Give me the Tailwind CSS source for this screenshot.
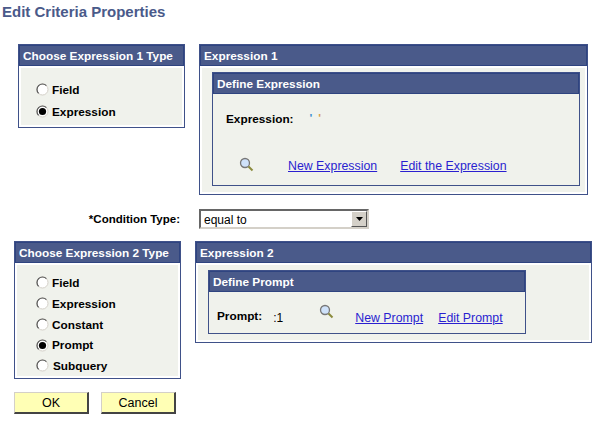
<!DOCTYPE html>
<html lang="en">
<head>
    <meta charset="UTF-8" />
    <title>Edit Criteria Properties</title>
    <script src="https://cdn.jsdelivr.net/npm/@tailwindcss/browser@4"></script>
</head>
<body class="bg-white w-[595px] h-[429px] overflow-hidden font-['Liberation_Sans',Arial,sans-serif] text-[11.8px] text-black">
    <h1 class="h-[44px] pl-[2px] pt-[4px] text-[15px] leading-4 font-bold text-[#4a5a8a]">Edit Criteria Properties</h1>

    <!-- expression 1 -->
    <div class="flex items-start gap-[14px] pl-[18px]">
        <div class="w-[167px] h-[84px] flex flex-col border border-[#3f5189]">
            <div class="h-[21px] shrink-0 bg-[#4a5a8a] border border-[#2f4480] pl-[3px] font-bold text-white leading-[21px]">Choose Expression 1 Type</div>
            <div class="flex-1 m-[2px] bg-[#f0f2ec] pt-[16px] pl-[15px] flex flex-col gap-[8px] font-bold">
                <label class="h-[14px] flex items-center gap-[3px]">
                    <svg class="w-[13px] h-[13px] -mt-[4px]" viewBox="0 0 13 13"><circle cx="6.5" cy="6.5" r="5.5" fill="#fff" stroke="#d4d0c8"/><path d="M2.6 10.4A5.5 5.5 0 0 1 10.4 2.6" fill="none" stroke="#555" stroke-width="1.2"/></svg>
                    <span>Field</span>
                </label>
                <label class="h-[14px] flex items-center gap-[3px]">
                    <svg class="w-[13px] h-[13px] -mt-[4px]" viewBox="0 0 13 13"><circle cx="6.5" cy="6.5" r="5.5" fill="#fff" stroke="#d4d0c8"/><path d="M2.6 10.4A5.5 5.5 0 0 1 10.4 2.6" fill="none" stroke="#555" stroke-width="1.2"/><circle cx="6.5" cy="6.5" r="3.6" fill="#000"/></svg>
                    <span>Expression</span>
                </label>
            </div>
        </div>

        <div class="w-[389px] h-[151px] flex flex-col border border-[#3f5189]">
            <div class="h-[21px] shrink-0 bg-[#4a5a8a] border border-[#2f4480] pl-[3px] font-bold text-white leading-[21px]">Expression 1</div>
            <div class="flex-1 m-[2px] bg-[#f0f2ec] pt-[4px] pl-[10px] pr-[5px]">
                <div class="h-[114px] flex flex-col border border-[#3f5189]">
                    <div class="h-[21px] shrink-0 bg-[#4a5a8a] border border-[#2f4480] pl-[3px] font-bold text-white leading-[21px]">Define Expression</div>
                    <div class="flex-1 pl-[13px] pt-[18px]">
                        <div class="flex font-bold leading-[14px]">
                            <span>Expression:</span>
                            <span class="ml-[16px] pt-[1px] font-bold text-[#3d8fd1] leading-[10px]">'</span>
                            <span class="ml-[6px] pt-[1px] font-bold text-[#d9a24a] leading-[10px]">'</span>
                        </div>
                        <div class="flex items-center mt-[31px] h-[18px]">
                            <svg class="w-[15px] h-[15px] ml-[13px] -mt-[4px]" viewBox="0 0 15 15"><circle cx="6" cy="6" r="4.5" fill="#cfe2fa" stroke="#777" stroke-width="1.3"/><path d="M9.5 9.5L13.5 13.5" stroke="#8a8a3c" stroke-width="2"/></svg>
                            <a href="#" class="ml-[34px] text-[12.35px] text-[#2a1fd0] underline">New Expression</a>
                            <a href="#" class="ml-[23px] text-[12.35px] text-[#2a1fd0] underline">Edit the Expression</a>
                        </div>
                    </div>
                </div>
            </div>
        </div>
    </div>

    <!-- condition -->
    <div class="flex items-center h-[20px] mt-[14px]">
        <label class="w-[180px] pt-[2px] text-right text-[11.5px] font-bold">*Condition Type:</label>
        <div class="ml-[19px] w-[170px] h-[20px] flex items-center justify-between border-2 border-t-[#666] border-l-[#666] border-r-[#d4d0c8] border-b-[#d4d0c8] bg-white">
            <span class="pl-[3px] pt-[1px] text-xs leading-4">equal to</span>
            <div class="w-[16px] h-[16px] bg-[#d4d0c8] border border-t-white border-l-white border-r-[#555] border-b-[#555] flex items-center justify-center">
                <svg class="w-[7px] h-[4px]" viewBox="0 0 7 4"><path d="M0 0H7L3.5 4Z" fill="#000"/></svg>
            </div>
        </div>
    </div>

    <!-- expression 2 -->
    <div class="flex items-start gap-[14px] pl-[14px] mt-[12px]">
        <div class="w-[167px] h-[138px] flex flex-col border border-[#3f5189]">
            <div class="h-[21px] shrink-0 bg-[#4a5a8a] border border-[#2f4480] pl-[3px] font-bold text-white leading-[21px]">Choose Expression 2 Type</div>
            <div class="flex-1 m-[2px] bg-[#f0f2ec] pt-[12px] pl-[19px] flex flex-col gap-[6.75px] font-bold">
                <label class="h-[14px] flex items-center gap-[3px]">
                    <svg class="w-[13px] h-[13px] -mt-[3px]" viewBox="0 0 13 13"><circle cx="6.5" cy="6.5" r="5.5" fill="#fff" stroke="#d4d0c8"/><path d="M2.6 10.4A5.5 5.5 0 0 1 10.4 2.6" fill="none" stroke="#555" stroke-width="1.2"/></svg>
                    <span>Field</span>
                </label>
                <label class="h-[14px] flex items-center gap-[3px]">
                    <svg class="w-[13px] h-[13px] -mt-[3px]" viewBox="0 0 13 13"><circle cx="6.5" cy="6.5" r="5.5" fill="#fff" stroke="#d4d0c8"/><path d="M2.6 10.4A5.5 5.5 0 0 1 10.4 2.6" fill="none" stroke="#555" stroke-width="1.2"/></svg>
                    <span>Expression</span>
                </label>
                <label class="h-[14px] flex items-center gap-[3px]">
                    <svg class="w-[13px] h-[13px] -mt-[3px]" viewBox="0 0 13 13"><circle cx="6.5" cy="6.5" r="5.5" fill="#fff" stroke="#d4d0c8"/><path d="M2.6 10.4A5.5 5.5 0 0 1 10.4 2.6" fill="none" stroke="#555" stroke-width="1.2"/></svg>
                    <span>Constant</span>
                </label>
                <label class="h-[14px] flex items-center gap-[3px]">
                    <svg class="w-[13px] h-[13px] -mt-[2px]" viewBox="0 0 13 13"><circle cx="6.5" cy="6.5" r="5.5" fill="#fff" stroke="#d4d0c8"/><path d="M2.6 10.4A5.5 5.5 0 0 1 10.4 2.6" fill="none" stroke="#555" stroke-width="1.2"/><circle cx="6.5" cy="6.5" r="3.6" fill="#000"/></svg>
                    <span>Prompt</span>
                </label>
                <label class="h-[14px] flex items-center gap-[3px]">
                    <svg class="w-[13px] h-[13px] -mt-[3px]" viewBox="0 0 13 13"><circle cx="6.5" cy="6.5" r="5.5" fill="#fff" stroke="#d4d0c8"/><path d="M2.6 10.4A5.5 5.5 0 0 1 10.4 2.6" fill="none" stroke="#555" stroke-width="1.2"/></svg>
                    <span class="ml-[1px]">Subquery</span>
                </label>
            </div>
        </div>

        <div class="w-[397px] h-[102px] flex flex-col border border-[#3f5189]">
            <div class="h-[21px] shrink-0 bg-[#4a5a8a] border border-[#2f4480] pl-[3px] font-bold text-white leading-[21px]">Expression 2</div>
            <div class="flex-1 m-[2px] bg-[#f0f2ec] pt-[5px] pl-[10px]">
                <div class="w-[318px] h-[64px] flex flex-col border border-[#3f5189]">
                    <div class="h-[21px] shrink-0 bg-[#4a5a8a] border border-[#2f4480] pl-[3px] font-bold text-white leading-[21px]">Define Prompt</div>
                    <div class="flex-1 flex items-center pl-[8px] pt-[11px]">
                        <span class="font-bold -mt-[2px]">Prompt:</span>
                        <span class="ml-[11px] text-xs">:1</span>
                        <svg class="w-[15px] h-[15px] ml-[36px] -mt-[13px]" viewBox="0 0 15 15"><circle cx="6" cy="6" r="4.5" fill="#cfe2fa" stroke="#777" stroke-width="1.3"/><path d="M9.5 9.5L13.5 13.5" stroke="#8a8a3c" stroke-width="2"/></svg>
                        <a href="#" class="ml-[21px] text-[12.35px] text-[#2a1fd0] underline">New Prompt</a>
                        <a href="#" class="ml-[15px] text-[12.35px] text-[#2a1fd0] underline">Edit Prompt</a>
                    </div>
                </div>
            </div>
        </div>
    </div>

    <!-- buttons -->
    <div class="flex gap-[12px] pl-[14px] mt-[13px]">
        <button class="w-[75px] h-[22px] bg-[#ffffb5] border border-t-[#d4d0c8] border-l-[#d4d0c8] border-r-[#444] border-b-[#444] border-r-2 border-b-2 text-[12.5px] leading-4">OK</button>
        <button class="w-[75px] h-[22px] bg-[#ffffb5] border border-t-[#d4d0c8] border-l-[#d4d0c8] border-r-[#444] border-b-[#444] border-r-2 border-b-2 text-[12.5px] leading-4">Cancel</button>
    </div>
</body>
</html>
